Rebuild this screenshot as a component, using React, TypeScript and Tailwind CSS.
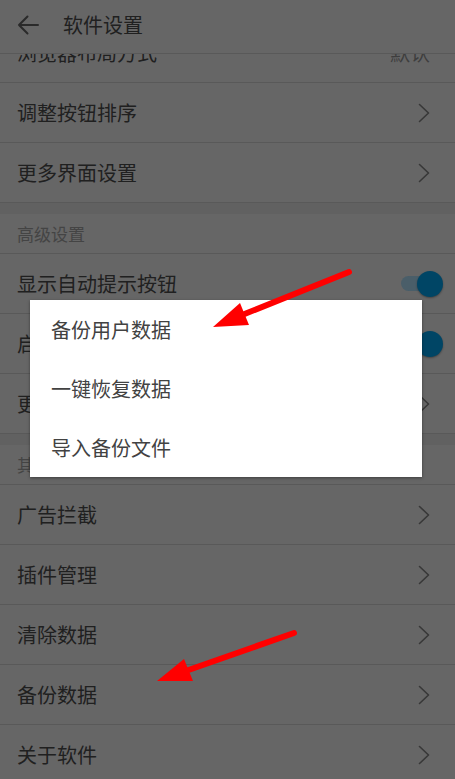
import React from 'react';

type Row = { label: string; value?: string; toggle?: boolean };

const font = { fontFamily: '"Noto Sans CJK SC", "Noto Sans", sans-serif' };

const Chevron = () => (
  <svg width="12" height="20" viewBox="0 0 12 20" fill="none" className="shrink-0">
    <path d="M1.5 1.5L10.5 10L1.5 18.5" stroke="#383838" strokeWidth="1.6" strokeLinecap="round" strokeLinejoin="round" />
  </svg>
);

const Toggle = () => (
  <div className="relative w-[42px] h-[28px] flex items-center shrink-0">
    <div className="w-[30px] h-[15px] rounded-full bg-[#4a5e69]" />
    <div className="absolute right-0 top-[1px] w-[26px] h-[26px] rounded-full bg-[#004565] shadow-[0_1px_2px_rgba(0,0,0,0.35)]" />
  </div>
);

const SettingRow = ({ row }: { row: Row }) => (
  <div className="h-[60px] shrink-0 flex items-center justify-between pl-[17px] pr-[25px] border-b border-[#595959]">
    <span className="text-[20px] text-[#202020] leading-none">{row.label}</span>
    {row.toggle ? (
      <div className="-mr-[13px]"><Toggle /></div>
    ) : row.value ? (
      <span className="text-[20px] text-[#3e3e3e] leading-none">{row.value}</span>
    ) : (
      <Chevron />
    )}
  </div>
);

const SectionHeader = ({ title }: { title: string }) => (
  <>
    <div className="h-[11px] shrink-0 bg-[#616161]" />
    <div className="h-[40px] shrink-0 flex items-center pl-[17px] border-b border-[#595959]">
      <span className="text-[17px] text-[#444444] leading-none">{title}</span>
    </div>
  </>
);

const Arrow = ({ from, tip, w1, w2 }: { from: [number, number]; tip: [number, number]; w1: [number, number]; w2: [number, number] }) => {
  const base: [number, number] = [(w1[0] + w2[0]) / 2, (w1[1] + w2[1]) / 2];
  return (
    <g>
      <line x1={from[0]} y1={from[1]} x2={base[0]} y2={base[1]} stroke="#ff0000" strokeWidth="6" strokeLinecap="round" />
      <polygon points={`${tip[0]},${tip[1]} ${w1[0]},${w1[1]} ${w2[0]},${w2[1]}`} fill="#ff0000" />
    </g>
  );
};

export default function App() {
  const display: Row[] = [
    { label: '浏览器布局方式', value: '默认' },
    { label: '调整按钮排序' },
    { label: '更多界面设置' },
  ];
  const advanced: Row[] = [
    { label: '显示自动提示按钮', toggle: true },
    { label: '启用高级功能', toggle: true },
    { label: '更多高级设置' },
  ];
  const other: Row[] = [
    { label: '广告拦截' },
    { label: '插件管理' },
    { label: '清除数据' },
    { label: '备份数据' },
    { label: '关于软件' },
  ];
  const menu = ['备份用户数据', '一键恢复数据', '导入备份文件'];

  return (
    <div className="relative w-[455px] h-[779px] overflow-hidden bg-[#666666] flex flex-col" style={font}>
      <header className="h-[54px] shrink-0 flex items-center border-b border-[#595959] relative z-10 bg-[#666666]">
        <svg width="22" height="20" viewBox="0 0 22 20" fill="none" className="ml-[17px] -mt-[3px]">
          <path d="M21 10H2M10.5 1.5L2 10l8.5 8.5" stroke="#2a2a2a" strokeWidth="2" strokeLinecap="round" strokeLinejoin="round" />
        </svg>
        <span className="ml-[24px] -mt-[3px] text-[20px] text-[#202020] leading-none">软件设置</span>
      </header>

      <div className="flex-1 overflow-hidden">
        <div className="-mt-[31px] flex flex-col">
          {display.map(r => <SettingRow key={r.label} row={r} />)}
          <SectionHeader title="高级设置" />
          {advanced.map(r => <SettingRow key={r.label} row={r} />)}
          <SectionHeader title="其他设置" />
          {other.map(r => <SettingRow key={r.label} row={r} />)}
        </div>
      </div>

      <div className="absolute left-[30px] top-[300px] w-[392px] bg-white shadow-[0_1px_3px_rgba(0,0,0,0.4)] flex flex-col z-20">
        {menu.map(m => (
          <div key={m} className="h-[59px] flex items-center pl-[21px]">
            <span className="text-[20px] text-[#424242] leading-none">{m}</span>
          </div>
        ))}
      </div>

      <svg className="absolute inset-0 z-30 pointer-events-none" width="455" height="779">
        <Arrow from={[349, 272]} tip={[213, 327]} w1={[240, 303]} w2={[249, 325]} />
        <Arrow from={[294, 633]} tip={[157, 681]} w1={[184, 659]} w2={[193, 681]} />
      </svg>
    </div>
  );
}
